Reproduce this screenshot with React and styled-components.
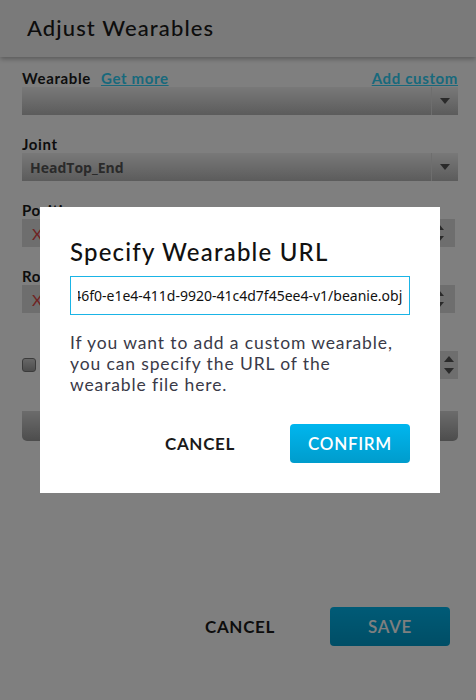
import React, { useEffect, useRef } from "react";
import styled, { createGlobalStyle } from "styled-components";

const GlobalStyle = createGlobalStyle`
  html, body {
    margin: 0;
    padding: 0;
    background: #ffffff;
    font-family: "Lato", "Open Sans", sans-serif;
    letter-spacing: 0.04em;
  }
  * { box-sizing: border-box; }
`;

const WEARABLE_URL =
  "https://hifi-content.s3.amazonaws.com/wearables/0f2c46f0-e1e4-411d-9920-41c4d7f45ee4-v1/beanie.obj";

export default function App() {
  const urlRef = useRef(null);

  useEffect(() => {
    if (urlRef.current) {
      urlRef.current.scrollLeft = urlRef.current.scrollWidth;
    }
  }, []);

  return (
    <>
      <GlobalStyle />
      <Page>
        <Header>
          <Title>Adjust Wearables</Title>
        </Header>
        <Content>
          <LabelRow>
            <Label>Wearable</Label>
            <LinkText>Get more</LinkText>
            <Spacer />
            <LinkText>Add custom</LinkText>
          </LabelRow>
          <Select>
            <SelectValue />
            <SelectArrow>
              <ArrowDown />
            </SelectArrow>
          </Select>

          <Label $top={20}>Joint</Label>
          <Select>
            <SelectValue>HeadTop_End</SelectValue>
            <SelectArrow>
              <ArrowDown />
            </SelectArrow>
          </Select>

          <Label $top={20}>Position</Label>
          <SpinRow>
            <NumberBox>
              <Axis>X</Axis>
            </NumberBox>
            <Spinner>
              <ArrowUp />
              <ArrowDown />
            </Spinner>
          </SpinRow>

          <Label $top={20}>Rotation</Label>
          <SpinRow>
            <NumberBox>
              <Axis>X</Axis>
            </NumberBox>
            <Spinner>
              <ArrowUp />
              <ArrowDown />
            </Spinner>
          </SpinRow>

          <CheckRow>
            <CheckBox />
            <Spacer />
            <Spinner $wide>
              <ArrowUp />
              <ArrowDown />
            </Spinner>
          </CheckRow>

          <WideButton />
        </Content>

        <Footer>
          <TextButton>CANCEL</TextButton>
          <PrimaryButton>SAVE</PrimaryButton>
        </Footer>

        <Overlay>
          <Modal>
            <ModalTitle>Specify Wearable URL</ModalTitle>
            <UrlInput ref={urlRef} defaultValue={WEARABLE_URL} />
            <ModalText>
              If you want to add a custom wearable,
              <br />
              you can specify the URL of the
              <br />
              wearable file here.
            </ModalText>
            <ModalActions>
              <TextButton>CANCEL</TextButton>
              <PrimaryButton>CONFIRM</PrimaryButton>
            </ModalActions>
          </Modal>
        </Overlay>
      </Page>
    </>
  );
}

const Page = styled.div`
  position: relative;
  width: 476px;
  height: 700px;
  background: #ffffff;
  display: flex;
  flex-direction: column;
  overflow: hidden;
`;

const Header = styled.header`
  height: 57px;
  flex-shrink: 0;
  display: flex;
  align-items: center;
  padding: 0 0 2px 27px;
  background: #f4f4f4;
  box-shadow: 0 2px 5px rgba(0, 0, 0, 0.3);
  position: relative;
  z-index: 1;
`;

const Title = styled.h1`
  margin: 0;
  font-size: 22px;
  font-weight: 500;
  letter-spacing: 0.05em;
  color: #1a1a1a;
`;

const Content = styled.div`
  padding: 12px 18px 0 22px;
  display: flex;
  flex-direction: column;
`;

const LabelRow = styled.div`
  display: flex;
  align-items: baseline;
  height: 18px;
`;

const Label = styled.div`
  font-size: 15px;
  font-weight: 700;
  color: #1a1a1a;
  height: 18px;
  line-height: 18px;
  margin-top: ${(p) => p.$top || 0}px;
`;

const LinkText = styled.a`
  font-size: 15px;
  font-weight: 700;
  color: #30d2f8;
  text-decoration: underline;
  margin-left: 10px;
  line-height: 18px;
`;

const Spacer = styled.div`
  flex: 1;
`;

const Select = styled.div`
  display: flex;
  height: 28px;
  background: linear-gradient(#f2f2f2, #b8b8b8);
`;

const SelectValue = styled.div`
  flex: 1;
  padding-left: 8px;
  display: flex;
  align-items: center;
  font-family: "Open Sans", sans-serif;
  letter-spacing: 0;
  font-size: 14px;
  font-weight: 700;
  color: #555;
`;

const SelectArrow = styled.div`
  width: 27px;
  border-left: 1px solid #dcdcdc;
  display: flex;
  align-items: center;
  justify-content: center;
`;

const ArrowDown = styled.span`
  width: 0;
  height: 0;
  border-left: 5px solid transparent;
  border-right: 5px solid transparent;
  border-top: 6px solid #555;
`;

const ArrowUp = styled.span`
  width: 0;
  height: 0;
  border-left: 5px solid transparent;
  border-right: 5px solid transparent;
  border-bottom: 6px solid #555;
`;

const SpinRow = styled.div`
  display: flex;
  height: 28px;
  margin-right: 3px;
  background: #dcdcdc;
`;

const NumberBox = styled.div`
  flex: 1;
  display: flex;
  align-items: center;
  padding-left: 10px;
`;

const Axis = styled.span`
  font-size: 16px;
  color: #e04848;
`;

const Spinner = styled.div`
  width: ${(p) => (p.$wide ? 18 : 16)}px;
  margin-right: ${(p) => (p.$wide ? 0 : 8)}px;
  height: 28px;
  display: flex;
  flex-direction: column;
  align-items: center;
  justify-content: center;
  gap: 6px;
  background: ${(p) => (p.$wide ? "#dcdcdc" : "transparent")};
`;

const CheckRow = styled.div`
  display: flex;
  align-items: center;
  margin-top: 38px;
  height: 28px;
`;

const CheckBox = styled.span`
  width: 14px;
  height: 14px;
  border-radius: 3px;
  background: linear-gradient(#cfcfcf, #9a9a9a);
  border: 1px solid #777;
`;

const WideButton = styled.div`
  margin-top: 32px;
  height: 30px;
  border-radius: 0 0 5px 5px;
  background: linear-gradient(#d8d8d8, #9a9a9a);
`;

const Footer = styled.div`
  margin-top: auto;
  display: flex;
  justify-content: flex-end;
  gap: 30px;
  padding: 0 26px 54px 0;
`;

const TextButton = styled.button`
  width: 120px;
  height: 39px;
  border: none;
  background: transparent;
  font-family: "Lato", sans-serif;
  letter-spacing: 0.04em;
  font-size: 17px;
  font-weight: 700;
  color: #1a1a1a;
  cursor: pointer;
`;

const PrimaryButton = styled.button`
  width: 120px;
  height: 39px;
  border: none;
  border-radius: 4px;
  background: linear-gradient(#00b6ee, #009ccc);
  font-family: "Lato", sans-serif;
  letter-spacing: 0.04em;
  font-size: 17px;
  font-weight: 600;
  color: #ffffff;
  cursor: pointer;
`;

const Overlay = styled.div`
  position: absolute;
  inset: 0;
  z-index: 5;
  background: rgba(0, 0, 0, 0.5);
  display: flex;
  align-items: center;
  justify-content: center;
  padding-left: 4px;
`;

const Modal = styled.div`
  width: 400px;
  height: 286px;
  background: #ffffff;
  padding: 29px 30px 30px 30px;
  display: flex;
  flex-direction: column;
`;

const ModalTitle = styled.h2`
  margin: 0;
  font-size: 24px;
  font-weight: 500;
  line-height: 32px;
  letter-spacing: 0.05em;
  color: #111;
`;

const UrlInput = styled.input`
  margin-top: 8px;
  height: 39px;
  width: 100%;
  border: 1px solid #1ab4e6;
  padding: 0 7px;
  font-family: "Noto Sans", "Open Sans", sans-serif;
  letter-spacing: 0;
  font-size: 14px;
  color: #111;
  outline: none;
`;

const ModalText = styled.p`
  margin: 17px 0 0 0;
  font-size: 17.5px;
  line-height: 21px;
  letter-spacing: 0.05em;
  white-space: nowrap;
  color: #3a3a48;
`;

const ModalActions = styled.div`
  margin-top: auto;
  display: flex;
  justify-content: flex-end;
  gap: 30px;
`;
